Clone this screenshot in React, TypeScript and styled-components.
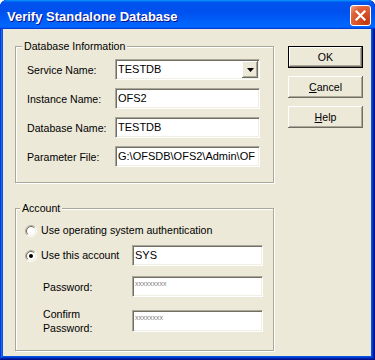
import React from "react";
import styled, { createGlobalStyle } from "styled-components";

const Global = createGlobalStyle`
  html, body { margin: 0; padding: 0; background: #ffffff; }
  body { font-family: "Liberation Sans", Arial, sans-serif; }
  * { box-sizing: border-box; }
`;

const Window = styled.div`
  width: 375px;
  height: 360px;
  display: flex;
  flex-direction: column;
  background: #0855dd;
  border-radius: 7px 7px 0 0;
  overflow: hidden;
  box-shadow: inset -1px -1px #00138c, inset 1px 1px #0831d9, inset -2px -2px #001ea0,
    inset 2px 2px #166aee, inset -3px -3px #003bda, inset 3px 3px #0855dd;
`;

const TitleBar = styled.div`
  height: 29px;
  flex: none;
  display: flex;
  align-items: center;
  justify-content: space-between;
  padding: 2px 4px 0 7px;
  background: linear-gradient(
    180deg,
    #0997ff,
    #0053ee 8%,
    #0050ee 40%,
    #0066ff 88%,
    #0066ff 93%,
    #005bff 95%,
    #003dd7 96%,
    #003dd7
  );
`;

const TitleText = styled.span`
  margin-top: 2px;
  font-family: "Liberation Sans", Arial, sans-serif;
  font-weight: bold;
  font-size: 13px;
  line-height: 16px;
  color: #ffffff;
  text-shadow: 1px 1px #0f1089;
`;

const CloseButton = styled.div`
  width: 21px;
  height: 21px;
  border: 1px solid #ffffff;
  border-radius: 3px;
  display: flex;
  align-items: center;
  justify-content: center;
  background: radial-gradient(circle at 80% 85%, #c1380f 0%, #d9542a 45%, #e1643a 70%, #f2a88c 100%);
`;

const Body = styled.div`
  flex: 1;
  margin: 0 4px 4px 3px;
  background: #ece9d8;
  display: flex;
  align-items: flex-start;
  padding: 11px 0 0 12px;
  gap: 14px;
  font-family: "Liberation Sans", Arial, sans-serif;
  font-size: 10.6px;
  color: #000000;
`;

const LeftColumn = styled.div`
  width: 259px;
  display: flex;
  flex-direction: column;
  gap: 19px;
`;

const Group = styled.fieldset<{ $pad: string }>`
  margin: 0;
  min-width: 0;
  padding: ${(p) => p.$pad};
  border: 1px solid #aca899;
  box-shadow: inset 1px 1px #ffffff, 1px 1px #ffffff;
`;

const Legend = styled.legend`
  margin-left: -5px;
  padding: 0 2px;
  line-height: 13px;
  background: #ece9d8;
`;

const FormGrid = styled.div<{ $cols: string; $gap: number }>`
  display: grid;
  grid-template-columns: ${(p) => p.$cols};
  row-gap: ${(p) => p.$gap}px;
  align-items: center;
`;

const Label = styled.div<{ $indent?: number }>`
  padding-left: ${(p) => p.$indent ?? 0}px;
  line-height: 14px;
  white-space: nowrap;
`;

const Field = styled.div<{ $h?: number }>`
  height: ${(p) => p.$h ?? 21}px;
  background: #ffffff;
  border: 1px solid;
  border-color: #aca899 #ffffff #ffffff #aca899;
  box-shadow: inset 1px 1px #716f64, inset -1px -1px #f1efe2;
  padding-left: 2px;
  font-size: 11px;
  line-height: 19px;
  white-space: nowrap;
  overflow: hidden;
`;

const ComboField = styled(Field)`
  display: flex;
  justify-content: space-between;
  padding: 1px;
  line-height: 17px;
`;

const ComboText = styled.span`
  padding-left: 1px;
`;

const DropButton = styled.div`
  width: 16px;
  height: 17px;
  display: flex;
  align-items: center;
  justify-content: center;
  background: #ece9d8;
  box-shadow: inset -1px -1px #716f64, inset 1px 1px #ffffff, inset -2px -2px #aca899;
`;

const MaskText = styled.div`
  font-size: 7px;
  line-height: 7px;
  padding-top: 3px;
  color: #808080;
`;

const RadioRow = styled.div<{ $mb?: number }>`
  display: flex;
  align-items: center;
  gap: 4px;
  line-height: 13px;
  margin-bottom: ${(p) => p.$mb ?? 0}px;
  white-space: nowrap;
`;

const ButtonColumn = styled.div`
  margin-top: 6px;
  display: flex;
  flex-direction: column;
  gap: 8px;
`;

const Button = styled.div<{ $default?: boolean }>`
  width: 75px;
  height: 22px;
  display: flex;
  align-items: center;
  justify-content: center;
  background: #ece9d8;
  border: ${(p) => (p.$default ? "1px solid #000000" : "none")};
  box-shadow: inset -1px -1px #716f64, inset 1px 1px #ffffff, inset -2px -2px #aca899;
  line-height: 13px;
`;

const Radio: React.FC<{ checked?: boolean }> = ({ checked }) => {
  const c = 6;
  const pt = (r: number) => {
    const d = r * 0.7071;
    return { bl: `${c - d} ${c + d}`, tr: `${c + d} ${c - d}` };
  };
  const o = pt(5.5);
  const i = pt(4.5);
  return (
    <svg width="12" height="12" viewBox="0 0 12 12">
      <circle cx="6" cy="6" r="4.5" fill="#ffffff" />
      <path d={`M${o.bl} A5.5 5.5 0 0 1 ${o.tr}`} stroke="#aca899" fill="none" />
      <path d={`M${o.tr} A5.5 5.5 0 0 1 ${o.bl}`} stroke="#ffffff" fill="none" />
      <path d={`M${i.bl} A4.5 4.5 0 0 1 ${i.tr}`} stroke="#716f64" fill="none" />
      <path d={`M${i.tr} A4.5 4.5 0 0 1 ${i.bl}`} stroke="#f1efe2" fill="none" />
      {checked && <circle cx="6" cy="6" r="2" fill="#000000" />}
    </svg>
  );
};

export default function App() {
  return (
    <>
      <Global />
      <Window>
        <TitleBar>
          <TitleText>Verify Standalone Database</TitleText>
          <CloseButton>
            <svg width="11" height="11" viewBox="0 0 11 11">
              <path d="M1.5 1.5 L9.5 9.5 M9.5 1.5 L1.5 9.5" stroke="#ffffff" strokeWidth="2.2" strokeLinecap="square" />
            </svg>
          </CloseButton>
        </TitleBar>
        <Body>
          <LeftColumn>
            <Group $pad="6px 12px 15px 11px">
              <Legend>Database Information</Legend>
              <FormGrid $cols="88px 145px" $gap={8}>
                <Label>Service Name:</Label>
                <ComboField>
                  <ComboText>TESTDB</ComboText>
                  <DropButton>
                    <svg width="7" height="4" viewBox="0 0 7 4">
                      <polygon points="0,0 7,0 3.5,4" fill="#000000" />
                    </svg>
                  </DropButton>
                </ComboField>
                <Label>Instance Name:</Label>
                <Field>OFS2</Field>
                <Label>Database Name:</Label>
                <Field>TESTDB</Field>
                <Label>Parameter File:</Label>
                <Field>G:\OFSDB\OFS2\Admin\OF</Field>
              </FormGrid>
            </Group>
            <Group $pad="9px 10px 15px 9px">
              <Legend>Account</Legend>
              <RadioRow $mb={8}>
                <Radio />
                <span>Use operating system authentication</span>
              </RadioRow>
              <FormGrid $cols="107px 131px" $gap={10}>
                <RadioRow>
                  <Radio checked />
                  <span>Use this account</span>
                </RadioRow>
                <Field>SYS</Field>
                <Label $indent={18}>Password:</Label>
                <Field>
                  <MaskText>xxxxxxxxx</MaskText>
                </Field>
                <Label $indent={18}>
                  Confirm
                  <br />
                  Password:
                </Label>
                <Field $h={22}>
                  <MaskText>xxxxxxxx</MaskText>
                </Field>
              </FormGrid>
            </Group>
          </LeftColumn>
          <ButtonColumn>
            <Button $default>OK</Button>
            <Button>
              <span>
                <u>C</u>ancel
              </span>
            </Button>
            <Button>
              <span>
                <u>H</u>elp
              </span>
            </Button>
          </ButtonColumn>
        </Body>
      </Window>
    </>
  );
}
